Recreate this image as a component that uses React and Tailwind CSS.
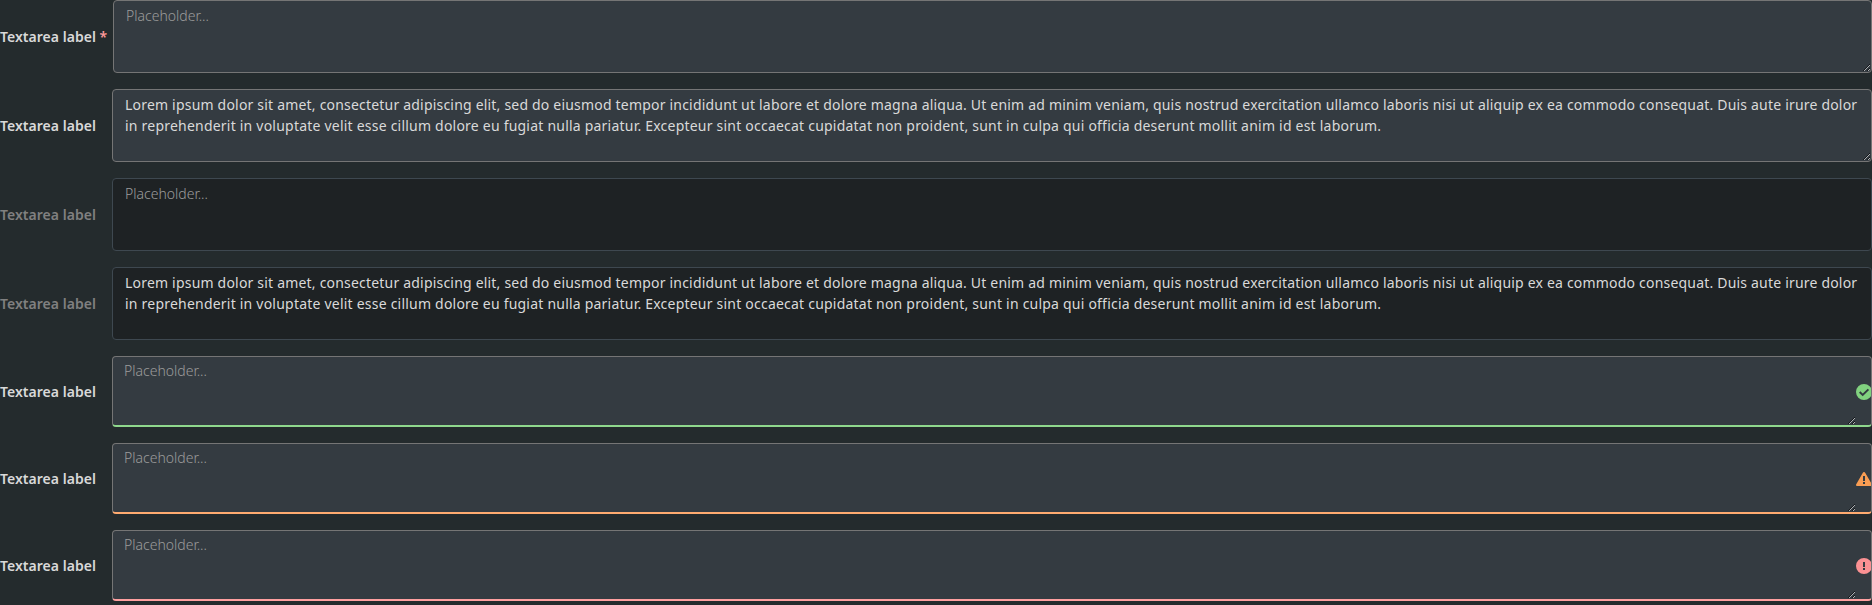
const LOREM_START =
  'Lorem ipsum dolor sit amet, consectetur adipiscing elit, sed do eiusmod tempor incididunt ut labore et dolore magna aliqua. Ut enim ad minim veniam, quis nostrud exercitation ullamco laboris nisi ut aliquip ex ea commodo consequat. Duis aute irure dolor ';
const LOREM_END =
  'in reprehenderit in voluptate velit esse cillum dolore eu fugiat nulla pariatur. Excepteur sint occaecat cupidatat non proident, sunt in culpa qui officia deserunt mollit anim id est laborum.';

const TEXT =
  'block min-w-0 flex-1 overflow-hidden bg-transparent text-[14px] leading-[21px] outline-none placeholder:font-light placeholder:text-[#9c9c9c] placeholder:opacity-100';

function CheckIcon() {
  return (
    <svg viewBox="0 0 16 16" className="size-4 shrink-0">
      <circle cx="8" cy="8" r="8" fill="#81d27f" />
      <path d="M3.7 8.1 6.7 10.9 12.4 5.4" fill="none" stroke="#343b41" strokeWidth="2" />
    </svg>
  );
}

function WarningIcon() {
  return (
    <svg viewBox="0 0 16 16" className="size-4 shrink-0">
      <path d="M8 1Q8.8 1 9.3 1.9L15.9 13.4Q16.3 15 15 15H1Q-.3 15 .1 13.4L6.7 1.9Q7.2 1 8 1Z" fill="#f99d53" />
      <path d="M7 5h2v5H7zM7 11h2v2H7z" fill="#343b41" />
    </svg>
  );
}

function ErrorIcon() {
  return (
    <svg viewBox="0 0 16 16" className="size-4 shrink-0">
      <circle cx="8" cy="8" r="8" fill="#fb9193" />
      <path d="M7 4h2v5H7zM7 10h2v2H7z" fill="#343b41" />
    </svg>
  );
}

const STATUS = {
  success: { line: 'border-b-[#8fd88d]', Icon: CheckIcon },
  warning: { line: 'border-b-[#ffab70]', Icon: WarningIcon },
  error: { line: 'border-b-[#ffa0a0]', Icon: ErrorIcon },
};

function Field({ required, disabled, status, filled }) {
  const state = STATUS[status];
  let box = 'h-[73px] border-[#757575] bg-[#343b41]';
  if (disabled) box = 'h-[73px] border-[#3e4850] bg-[#1e2224]';
  if (state) box = 'h-[71px] border-t-[#757575] border-x-[#757575] border-b-2 bg-[#343b41] ' + state.line;
  const control =
    TEXT + (state ? ' px-[11px] py-[3px]' : ' px-3 py-1') + (disabled ? ' resize-none' : ' resize-y');
  return (
    <div className="flex items-center">
      <label
        className={
          'shrink-0 text-[14px] leading-[21px] font-semibold tracking-[0.03px] whitespace-nowrap ' +
          (required ? 'w-[113px] ' : 'w-[112px] ') +
          (disabled ? 'text-[#808080]' : 'text-[#d9d9d9]')
        }
      >
        Textarea label{required && <span className="text-[#ff9a9a]"> *</span>}
      </label>
      <div className={'flex min-w-0 flex-1 overflow-hidden rounded-[4px] border ' + box}>
        {filled ? (
          <div role="textbox" aria-multiline="true" className={control + ' text-[#d9d9d9]'}>
            <span className="tracking-[0.197px]">{LOREM_START}</span>
            <span className="tracking-[0.217px]">{LOREM_END}</span>
          </div>
        ) : (
          <textarea placeholder="Placeholder..." disabled={disabled} className={control} />
        )}
        {state && (
          <div className="-mr-px flex w-4 shrink-0 items-center pt-px">
            <state.Icon />
          </div>
        )}
      </div>
    </div>
  );
}

export default function App() {
  return (
    <main className="flex h-screen flex-col gap-4 overflow-hidden bg-[#242b2d] font-['Noto_Sans',sans-serif]">
      <Field required />
      <Field filled />
      <Field disabled />
      <Field disabled filled />
      <Field status="success" />
      <Field status="warning" />
      <Field status="error" />
    </main>
  );
}
